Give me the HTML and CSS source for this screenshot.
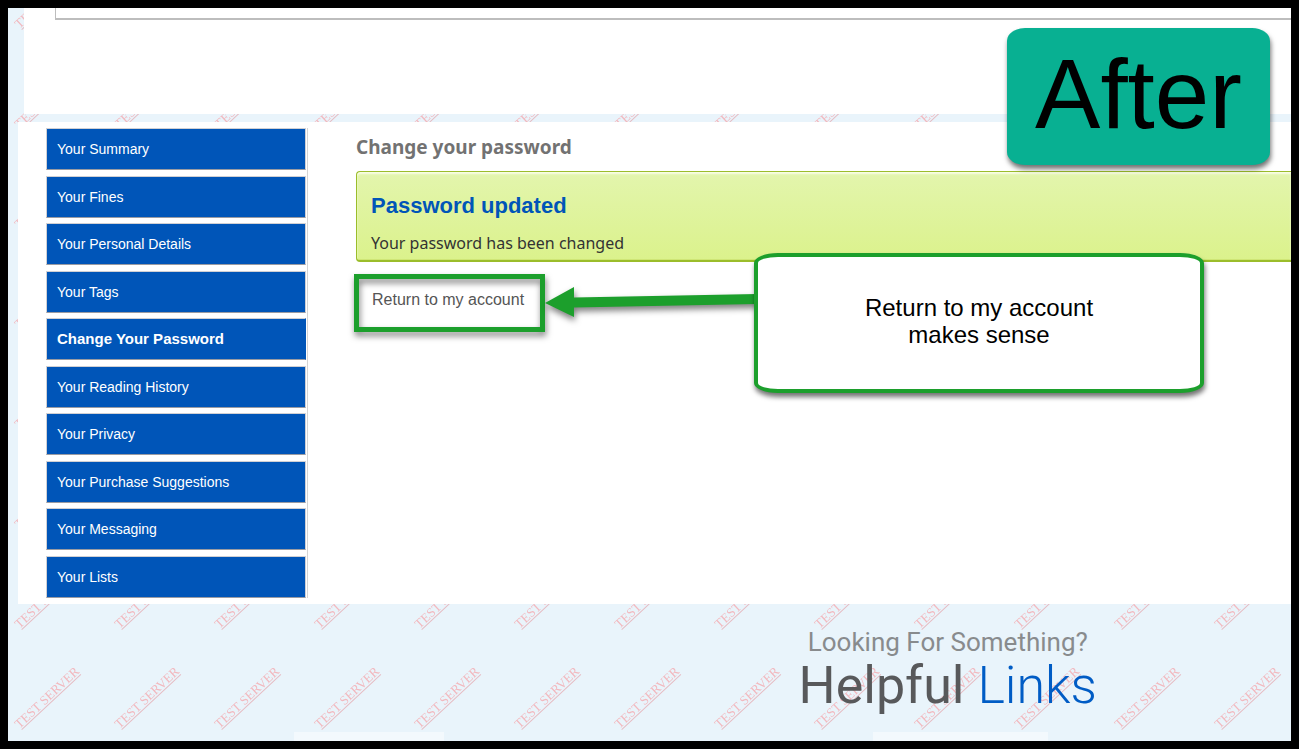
FILE: index.html
```html
<!DOCTYPE html>
<html lang="en">
<head>
<meta charset="utf-8">
<title>Change your password</title>
<link rel="stylesheet" href="styles.css">
</head>
<body>
<div class="page">
  <svg class="watermark" aria-hidden="true">
    <defs>
      <pattern id="stamp" x="-8" y="42" width="100" height="100" patternUnits="userSpaceOnUse">
        <g transform="translate(21 79) rotate(-43)">
          <text class="stamp-text" x="-1" y="-1">TEST SERVER</text>
          <path class="stamp-line" d="M0 1H81"/>
        </g>
      </pattern>
    </defs>
    <rect width="100%" height="100%" fill="url(#stamp)"/>
  </svg>

  <header class="top-panel"><div class="top-box"></div></header>

  <main class="account">
    <nav class="menu" aria-label="Account">
      <a href="#">Your Summary</a>
      <a href="#">Your Fines</a>
      <a href="#">Your Personal Details</a>
      <a href="#">Your Tags</a>
      <a href="#" class="active" aria-current="page">Change Your Password</a>
      <a href="#">Your Reading History</a>
      <a href="#">Your Privacy</a>
      <a href="#">Your Purchase Suggestions</a>
      <a href="#">Your Messaging</a>
      <a href="#">Your Lists</a>
    </nav>
    <section class="content">
      <h1 class="title">Change your password</h1>
      <div class="alert">
        <h2 class="alert-title">Password updated</h2>
        <p class="alert-text">Your password has been changed</p>
      </div>
      <a class="return-link" href="#">Return to my account</a>
    </section>
  </main>

  <footer class="footer">
    <div class="footer-column"><div class="strip strip-left"></div></div>
    <div class="footer-column">
      <p class="footer-lead">Looking For Something?</p>
      <h2 class="footer-title">Helpful <span class="footer-accent">Links</span></h2>
      <div class="strip strip-right"></div>
    </div>
  </footer>

  <div class="note highlight"></div>
  <svg class="note arrow" viewBox="0 0 212 40" aria-hidden="true">
    <path d="M0 17 29 1V11.500L212 8V18L29 21.500V31Z"/>
  </svg>
  <div class="note callout">Return to my account<br>makes sense</div>
  <div class="note badge">After</div>
</div>
</body>
</html>
```
FILE: styles.css
```css
* { box-sizing: border-box; }
body {
  margin: 0;
  border: 8px solid #000;
  min-height: 100vh;
  display: flex;
  font-family: "Liberation Sans", Arial, sans-serif;
}
h1, h2, p { margin: 0; }
a { text-decoration: none; }

.page {
  position: relative;
  flex: 1;
  min-width: 0;
  display: flex;
  flex-direction: column;
  overflow: hidden;
  background: #e9f4fb;
}
.watermark {
  position: absolute;
  top: 0;
  left: 0;
  width: 100%;
  height: 100%;
}
.stamp-text {
  font-family: "Liberation Serif", serif;
  font-size: 13px;
  fill: #f2b9bf;
}
.stamp-line { stroke: #e6bcc3; stroke-width: 1; }

.top-panel {
  position: relative;
  margin: 0 0 8px 16px;
  padding: 0 0 94px 31px;
  background: #fff;
}
.top-box {
  height: 12px;
  border-left: 1px solid #bdbdbd;
  border-bottom: 2px solid #bdbdbd;
}

.account {
  position: relative;
  display: flex;
  gap: 48px;
  margin-left: 10px;
  padding: 6px 0 6px 28px;
  background: #fff;
}
.menu {
  flex: 0 0 262px;
  min-height: 470px;
  display: flex;
  flex-direction: column;
  justify-content: space-between;
  padding-right: 1px;
  border-right: 1px solid #d4d4d4;
}
.menu a {
  height: 42px;
  padding: 0 10px;
  border: 1px solid #d0d0d4;
  border-bottom-color: #999ba3;
  background: #0055b8;
  color: #fff;
  font-size: 14px;
  line-height: 40px;
}
.menu .active {
  font-weight: bold;
  font-size: 15px;
  border-right-color: #0055b8;
}

.content { flex: 1; min-width: 0; }
.title {
  padding-top: 5px;
  font: bold 19px/28px "Noto Sans", sans-serif;
  color: #727272;
}
.alert {
  margin-top: 10px;
  height: 91px;
  padding: 20px 14px 0;
  border: 1px solid #9bbd2b;
  border-bottom-width: 2px;
  border-right: 0;
  border-radius: 4px 0 0 4px;
  background: linear-gradient(#e3f5ad, #dbf28c);
  box-shadow: inset 0 2px 2px #f8fde6, inset 0 -1px 0 #cfe676;
}
.alert-title {
  font-size: 22px;
  line-height: 28px;
  color: #0055b8;
}
.alert-text {
  margin-top: 11px;
  font: 16px/24px "Noto Sans", sans-serif;
  color: #333;
}
.return-link {
  display: inline-block;
  margin: 28px 0 0 16px;
  font-size: 16px;
  line-height: 20px;
  color: #555;
}

.footer {
  position: relative;
  flex: 1;
  display: grid;
  grid-template-columns: 46.5% 1fr;
}
.footer-column {
  display: flex;
  flex-direction: column;
  align-items: center;
  padding-top: 22px;
  font-family: Roboto, sans-serif;
}
.footer-lead {
  font-size: 26px;
  line-height: 32px;
  color: #888b8d;
}
.footer-title {
  font-size: 52px;
  line-height: 56px;
  font-weight: 400;
  color: #58595b;
}
.footer-accent { font-weight: 300; color: #005cc5; }
.strip {
  align-self: flex-start;
  height: 9px;
  margin-top: auto;
  background: #f3f9fd;
}
.strip-left { width: 150px; margin-left: 286px; }
.strip-right { width: 175px; margin-left: 268px; }

.note { position: absolute; }
.highlight {
  top: 266px;
  left: 346px;
  width: 191px;
  height: 58px;
  border: 5px solid #1c9f2c;
  filter: drop-shadow(1px 4px 3px rgba(0, 0, 0, .5));
}
.arrow {
  top: 278px;
  left: 537px;
  width: 212px;
  height: 40px;
  fill: #1c9f2c;
  filter: drop-shadow(1px 4px 3px rgba(0, 0, 0, .5));
}
.callout {
  top: 245px;
  left: 746px;
  width: 450px;
  height: 140px;
  padding-top: 37px;
  border: 4px solid #1c9f2c;
  border-radius: 24px / 10px;
  background: #fff;
  box-shadow: 1px 4px 5px rgba(0, 0, 0, .55);
  font-size: 24px;
  line-height: 27px;
  text-align: center;
}
.badge {
  top: 20px;
  left: 999px;
  width: 263px;
  height: 137px;
  border-radius: 18px / 13px;
  background: #08b092;
  box-shadow: 1px 4px 5px rgba(0, 0, 0, .55);
  font-size: 98px;
  line-height: 132px;
  text-align: center;
}
```
